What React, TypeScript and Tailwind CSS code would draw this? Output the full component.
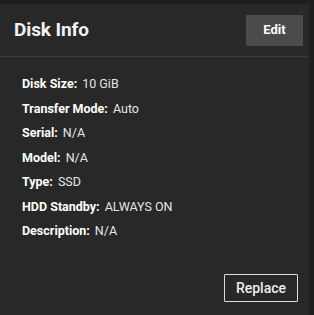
const rows: [string, string][] = [
  ['Disk Size:', '10 GiB'],
  ['Transfer Mode:', 'Auto'],
  ['Serial:', 'N/A'],
  ['Model:', 'N/A'],
  ['Type:', 'SSD'],
  ['HDD Standby:', 'ALWAYS ON'],
  ['Description:', 'N/A'],
];

export default function App() {
  return (
    <div className="w-[314px] h-[315px] bg-[#1e1e1e] pt-[4px] pr-[5px] font-['Roboto',sans-serif]">
      <div className="h-full bg-[#282828] flex flex-col">
        <div className="flex items-center justify-between h-[53px] pl-[14px] pr-[6px] border-b border-[#3a3a3a]">
          <h2 className="text-[19px] font-bold text-[#f2f2f2] tracking-[-0.1px]">Disk Info</h2>
          <button className="w-[57px] h-[31px] bg-[#4b4b4b] text-[13px] font-bold text-white rounded-[1px]">
            Edit
          </button>
        </div>
        <div className="flex flex-col gap-[8.5px] pl-[22px] pt-[19px] text-[12.5px] leading-[16px] text-[#e6e6e6]">
          {rows.map(([k, v]) => (
            <div key={k} className="flex gap-[5px]">
              <span className="font-bold text-white">{k}</span>
              <span>{v}</span>
            </div>
          ))}
        </div>
        <div className="mt-auto flex justify-end pr-[11px] pb-[13px]">
          <button className="w-[74px] h-[28px] border border-[#dcdcdc] text-[14px] font-medium text-[#eeeeee] rounded-[1px]">
            Replace
          </button>
        </div>
      </div>
    </div>
  );
}
